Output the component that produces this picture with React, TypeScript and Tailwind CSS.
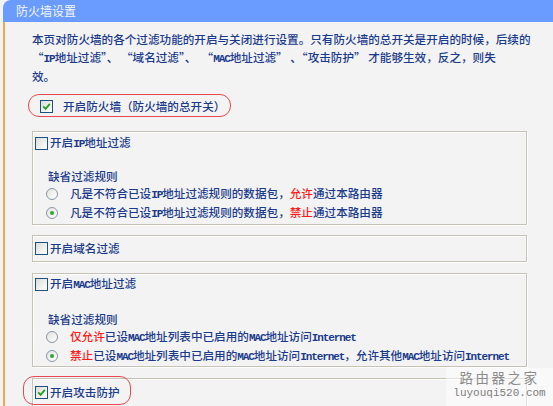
import React from "react";

const L = ({ t }: { t: string }) => (
  <span className="font-['Liberation_Mono',monospace] font-bold text-[11px] tracking-[-1.1px]">{t}</span>
);

const Check = ({ checked }: { checked?: boolean }) => (
  <span className="inline-flex w-[13px] h-[13px] shrink-0 items-center justify-center border border-[#1c5180] bg-gradient-to-br from-[#dcdcd7] to-white">
    {checked && (
      <svg width="9" height="9" viewBox="0 0 9 9">
        <path d="M1.2 4.3 L3.6 6.8 L7.8 1.8" stroke="#22a322" strokeWidth="1.8" fill="none" />
      </svg>
    )}
  </span>
);

const Radio = ({ checked }: { checked?: boolean }) => (
  <span className="inline-flex w-[12px] h-[12px] shrink-0 items-center justify-center rounded-full border border-[#8796a8] bg-gradient-to-br from-[#e2e2de] to-white">
    {checked && <span className="w-[4px] h-[4px] rounded-full bg-[#2ea82e]" />}
  </span>
);

const R = ({ t }: { t: string }) => <span className="text-[#ff1a1a]">{t}</span>;

const fs =
  "w-[495px] border border-[#c6c2b6] shadow-[inset_1px_1px_0_#ffffff,1px_1px_0_#ffffff]";

const CbRow = ({ checked, children }: { checked?: boolean; children: React.ReactNode }) => (
  <div className="flex items-center h-[18px] pl-[2px] gap-[2px]">
    <Check checked={checked} />
    <span className="whitespace-nowrap">{children}</span>
  </div>
);

const RadioRow = ({ checked, children }: { checked?: boolean; children: React.ReactNode }) => (
  <div className="flex items-center h-[19px] pl-[13px] gap-[12px]">
    <Radio checked={checked} />
    <span className="whitespace-nowrap">{children}</span>
  </div>
);

export default function App() {
  return (
    <div className="relative w-[553px] h-[406px] overflow-hidden bg-[#f3f3f3] font-['Noto_Sans_CJK_SC',sans-serif] font-medium text-[11.6px] text-[#1a3a8c]">
      <div className="ml-[3px] flex flex-col">
        <div className="h-[22px] bg-[#6a9bff] rounded-tl-[8px] pl-[13px] text-[12px] font-normal leading-[22px] text-[#f4f6ff]">
          防火墙设置
        </div>
        <div className="border-l-2 border-[#f2a555] pl-[27px] pt-[9px] h-[400px]">
          <div className="leading-[17.5px]">
            <div className="whitespace-nowrap">
              本页对防火墙的各个过滤功能的开启与关闭进行设置。只有防火墙的总开关是开启的时候，后续的
            </div>
            <div className="whitespace-nowrap">
              “<L t="IP" />地址过滤”、 “域名过滤”、 &nbsp;“<L t="MAC" />地址过滤” 、“攻击防护” 才能够生效，反之，则失
            </div>
            <div className="whitespace-nowrap">效。</div>
          </div>

          <div className="-ml-[4px] mt-[8px] w-[203px] h-[23px] rounded-[11px] border-[1.5px] border-[#e8484f] flex items-center pl-[11px] pt-[3px] gap-[10px]">
            <Check checked />
            <span className="whitespace-nowrap">开启防火墙（防火墙的总开关）</span>
          </div>

          <div className={`${fs} h-[94px] mt-[14px] pt-[3px]`}>
            <CbRow>
              开启<L t="IP" />地址过滤
            </CbRow>
            <div className="mt-[14px] h-[18px] leading-[18px] pl-[15px]">缺省过滤规则</div>
            <RadioRow>
              凡是不符合已设<L t="IP" />地址过滤规则的数据包，<R t="允许" />通过本路由器
            </RadioRow>
            <RadioRow checked>
              凡是不符合已设<L t="IP" />地址过滤规则的数据包，<R t="禁止" />通过本路由器
            </RadioRow>
          </div>

          <div className={`${fs} h-[27px] mt-[10px] pt-[4px]`}>
            <CbRow>开启域名过滤</CbRow>
          </div>

          <div className={`${fs} h-[94px] mt-[11px] pt-[2px]`}>
            <CbRow>
              开启<L t="MAC" />地址过滤
            </CbRow>
            <div className="mt-[16px] h-[18px] leading-[18px] pl-[15px]">缺省过滤规则</div>
            <RadioRow>
              <R t="仅允许" />已设<L t="MAC" />地址列表中已启用的<L t="MAC" />地址访问<L t="Internet" />
            </RadioRow>
            <RadioRow checked>
              <R t="禁止" />已设<L t="MAC" />地址列表中已启用的<L t="MAC" />地址访问<L t="Internet" />，允许其他<L t="MAC" />地址访问<L t="Internet" />
            </RadioRow>
          </div>

          <div className={`${fs} relative h-[40px] mt-[11px] pt-[5px]`}>
            <CbRow checked>开启攻击防护</CbRow>
            <div className="absolute -left-[10px] -top-[3px] w-[108px] h-[29px] rounded-[11px] border-[1.5px] border-[#e8484f]" />
          </div>
        </div>
      </div>

      <div className="absolute right-0 bottom-0 w-[107px] h-[38px] bg-white/50 flex flex-col items-center font-normal">
        <div className="text-[13.5px] leading-[19px] tracking-[2.5px] text-[#8c8c8c]">路由器之家</div>
        <div className="font-['Liberation_Mono',monospace] text-[11px] leading-[13px] text-[#7d7d7d]">
          luyouqi520.com
        </div>
      </div>
    </div>
  );
}
